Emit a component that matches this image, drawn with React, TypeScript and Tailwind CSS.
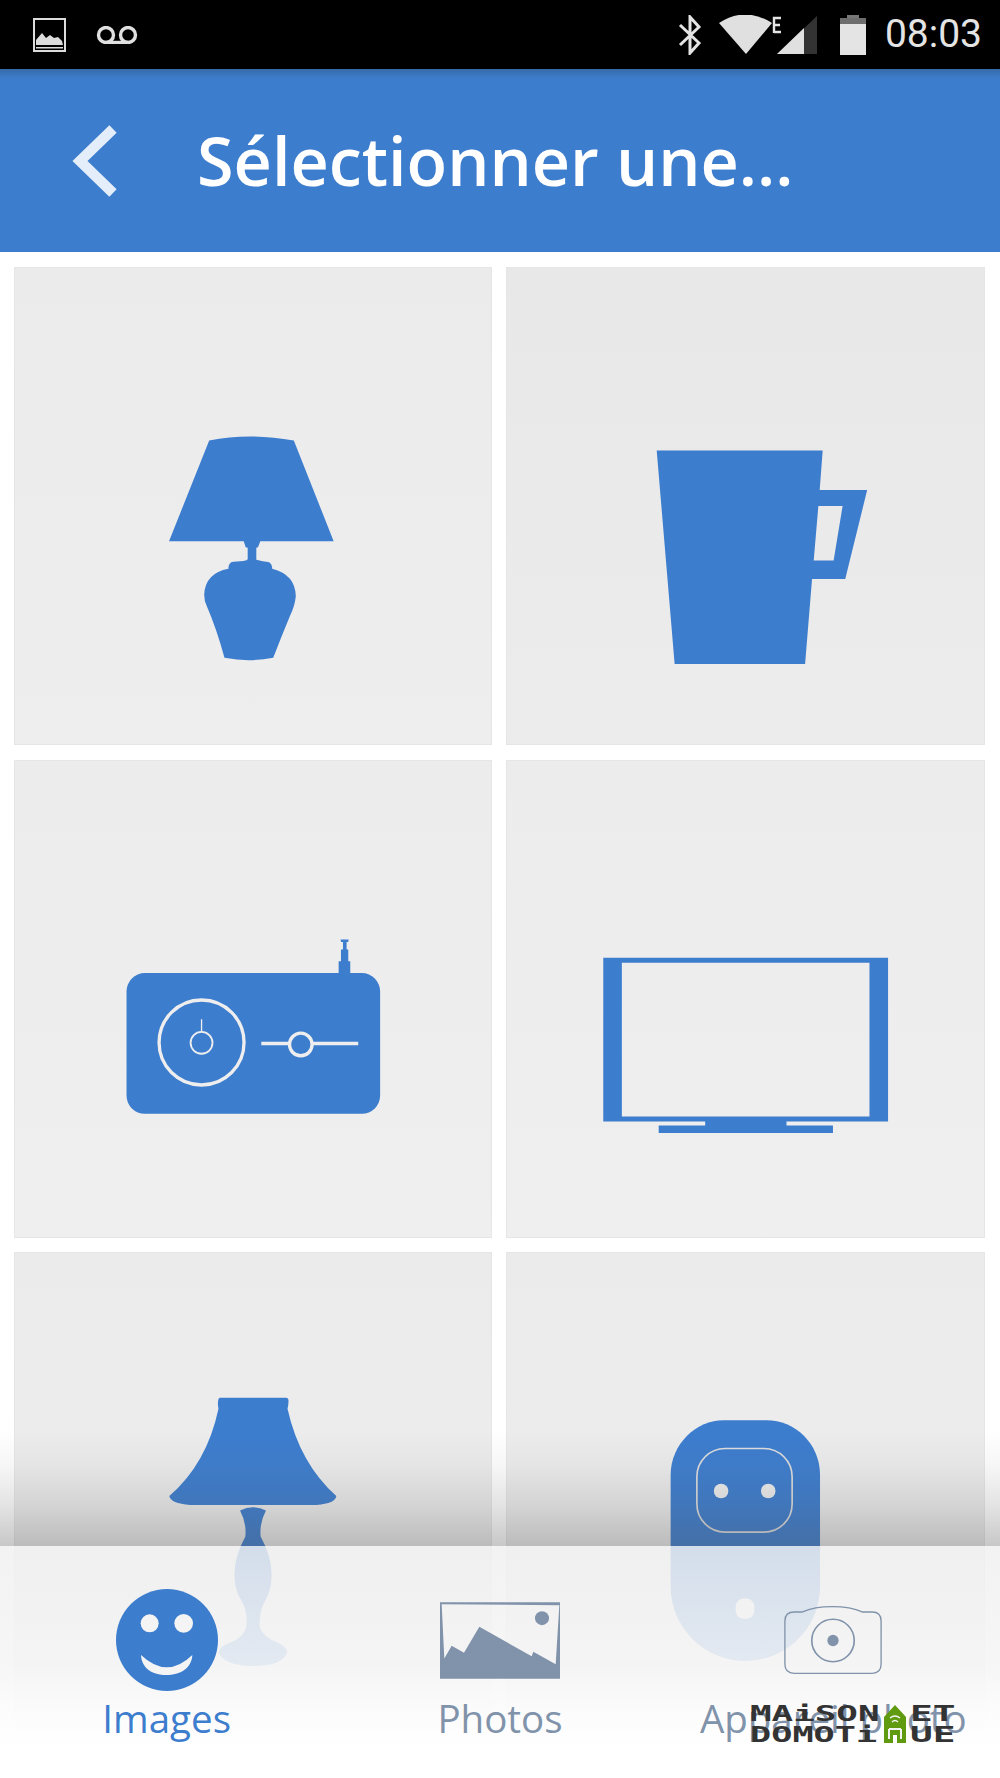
import React from "react";

const BLUE = "#3d7dce";
const SLATE = "#8093aa";

function Cell({ box, children, tone }: { box: string; children: React.ReactNode; tone: string }) {
  return (
    <div className={`h-[478px] border border-[#e6e6e6] ${tone}`}>
      <svg viewBox={box} className="block h-full w-full">
        {children}
      </svg>
    </div>
  );
}

function StatusBar() {
  return (
    <div className="flex h-[69px] items-center justify-between bg-black">
      <div className="flex items-center">
        <svg width="34" height="34" viewBox="0 0 34 34" className="ml-[33px]">
          <rect x="1" y="1" width="31" height="32" fill="none" stroke="#dcdcdc" strokeWidth="2" />
          <path d="M3 27 L3 22 L9 15 L13 20 L17 17 L21 20 L25 19 L29 23 L30 27 Z" fill="#dcdcdc" />
          <rect x="3" y="29" width="27" height="1.5" fill="#dcdcdc" />
        </svg>
        <svg width="42" height="18" viewBox="0 0 42 18" className="ml-[29px]">
          <circle cx="10" cy="9" r="7.5" fill="none" stroke="#e0e0e0" strokeWidth="3.4" />
          <circle cx="32" cy="9" r="7.5" fill="none" stroke="#e0e0e0" strokeWidth="3.4" />
          <path d="M10 16.5 H32" stroke="#e0e0e0" strokeWidth="3.4" />
        </svg>
      </div>
      <div className="flex items-center">
        <svg width="24" height="40" viewBox="0 0 24 40">
          <path d="M2 10 L21 28 L12 38 L12 2 L21 12 L2 30" fill="none" stroke="#e4e4e4" strokeWidth="3" />
        </svg>
        <svg width="100" height="40" viewBox="0 0 100 40" className="ml-[16px]">
          <path d="M28 39 L1 8 Q27 -9 54 8 Z" fill="#e0e0e0" />
          <path d="M56 18 V3 H63 M56 10 H62 M56 17 H63" fill="none" stroke="#e4e4e4" strokeWidth="2.4" />
          <path d="M59 39 L99 1 V39 Z" fill="#333333" />
          <path d="M59 39 L86 13 V39 Z" fill="#e0e0e0" />
        </svg>
        <div className="ml-[22px] flex h-[40px] w-[26px] flex-col items-center">
          <div className="h-[3px] w-[12px] bg-[#777777]" />
          <div className="h-[6px] w-full bg-[#6e6e6e]" />
          <div className="w-full flex-1 bg-[#e4e4e4]" />
        </div>
        <span className="ml-[19px] mr-[18px] font-['Roboto',sans-serif] text-[39px] leading-none text-[#e4e4e4]">
          08:03
        </span>
      </div>
    </div>
  );
}

function Header() {
  return (
    <div className="flex h-[183px] items-center bg-[linear-gradient(to_bottom,#3669a9,#3d7ccb_9px,#3d7dce_14px)]">
      <svg width="46" height="72" viewBox="0 0 46 72" className="ml-[72px]">
        <path d="M41 4 L8 36 L41 68" fill="none" stroke="#e3eefa" strokeWidth="10.5" />
      </svg>
      <h1 className="ml-[79px] font-['Open_Sans',sans-serif] text-[66.5px] font-semibold leading-none text-white">
        Sélectionner une...
      </h1>
    </div>
  );
}

function Grid() {
  return (
    <div className="grid grid-cols-[478px_479px] gap-x-[14px] gap-y-[14.5px] pl-[14px] pt-[15px]">
      <Cell box="0 0 1434 1434" tone="bg-[linear-gradient(to_bottom,#ebebeb,#eeeeee)]">
        <g transform="translate(258 399)">
          <path
            d="M206 424 L327 121 Q447 96 582 121 L702 424 L481 424 L474 442 L469 444 L469 480 Q490 486 505 487 Q516 490 517 507 Q587 525 588 590 Q585 620 570 650 Q545 710 520 775 Q447 790 373 775 Q350 690 320 620 Q312 605 312 585 Q315 520 385 507 Q385 487 400 486 L430 484 Q443 482 443 478 L443 444 L437 442 L431 424 Z"
            fill={BLUE}
          />
        </g>
      </Cell>
      <Cell box="0 0 1437 1434" tone="bg-[linear-gradient(to_bottom,#e8e8e8,#ececec)]">
        <g transform="translate(402 489)">
          <path
            fillRule="evenodd"
            d="M49 61 L549 61 L540 180 L683 180 L617 448 L517 448 L496 704 L103 704 Z M536 228 L609 228 L582 392 L522 392 Z"
            fill={BLUE}
          />
        </g>
      </Cell>
      <Cell box="0 0 1434 1434" tone="bg-[linear-gradient(to_bottom,#ececec,#efefef)]">
        <g transform="translate(258 483)">
          <path d="M723 55 H747 L746 62 H741 V85 H746 V120 H752 V160 H717 V120 H724 V85 H730 V62 H724 Z" fill={BLUE} />
          <rect x="78" y="156" width="764" height="424" rx="55" fill={BLUE} />
          <circle cx="304" cy="365" r="128" fill="none" stroke="#eeeeee" strokeWidth="10" />
          <circle cx="304" cy="366" r="33" fill="none" stroke="#eeeeee" strokeWidth="5.5" />
          <path d="M304 295 V333" stroke="#eeeeee" strokeWidth="4" />
          <path d="M484 368 H776" stroke="#eeeeee" strokeWidth="10" />
          <circle cx="603" cy="371" r="34" fill={BLUE} stroke="#eeeeee" strokeWidth="10" />
        </g>
      </Cell>
      <Cell box="0 0 1437 1434" tone="bg-[linear-gradient(to_bottom,#ececec,#efefef)]">
        <g transform="translate(222 543)">
          <path
            fillRule="evenodd"
            d="M68 50 H926 V543 H620 V555 H760 V578 H235 V555 H375 V543 H68 Z M124 65 V528 H870 V65 Z"
            fill={BLUE}
          />
        </g>
      </Cell>
      <Cell box="0 0 1434 1434" tone="bg-[linear-gradient(to_bottom,#ebebeb,#eeeeee)]">
        <g transform="translate(-42 384)">
          <path
            d="M660 52 L858 52 Q866 52 866 62 Q866 72 863 85 Q900 250 1010 348 Q1008 370 950 375 L570 375 Q510 370 507 348 Q620 250 655 85 Q652 70 654 62 Q655 52 660 52 Z"
            fill={BLUE}
          />
          <path
            d="M798 392 Q778 430 782 470 Q815 530 815 585 Q815 630 795 665 Q775 700 780 745 Q790 775 835 790 Q862 805 862 818 Q850 860 760 860 Q670 860 655 818 Q660 800 690 790 Q730 775 738 745 Q745 700 725 665 Q703 630 703 585 Q703 530 736 470 Q740 430 720 392 Q740 382 759 382 Q780 382 798 392 Z"
            fill={BLUE}
          />
        </g>
      </Cell>
      <Cell box="0 0 1437 1434" tone="bg-[linear-gradient(to_bottom,#ebebeb,#eeeeee)]">
        <g transform="translate(-18 384)">
          <path
            d="M511 285 C511 190 590 120 670 120 L800 120 C885 120 961 190 961 285 L961 620 C961 745 860 845 736 845 C612 845 511 745 511 620 Z"
            fill={BLUE}
          />
          <rect x="590" y="205" width="287" height="252" rx="85" fill="none" stroke="#dddddd" strokeWidth="5" />
          <circle cx="663" cy="333" r="22" fill="#eeeeee" />
          <circle cx="805" cy="333" r="22" fill="#eeeeee" />
          <rect x="707" y="657" width="56" height="61" rx="24" fill="#eeeeee" />
        </g>
      </Cell>
    </div>
  );
}

function Tab({ label, color, children }: { label: string; color: string; children: React.ReactNode }) {
  return (
    <div className="flex flex-col items-center pt-[38px]">
      <div className="flex h-[110px] items-center justify-center">{children}</div>
      <span className={`whitespace-nowrap font-['Open_Sans',sans-serif] text-[38.5px] leading-[48px] ${color}`}>
        {label}
      </span>
    </div>
  );
}

function BottomBar() {
  return (
    <div className="absolute inset-x-0 bottom-0 h-[232px]">
      <div className="absolute inset-x-0 bottom-full h-[115px] bg-[linear-gradient(to_bottom,rgba(83,83,83,0),rgba(83,83,83,0.05)_30%,rgba(83,83,83,0.16)_65%,rgba(83,83,83,0.32))]" />
      <div className="grid h-full grid-cols-3 bg-[linear-gradient(to_bottom,rgba(240,240,240,0.84),rgba(245,245,245,0.9)_50%,rgba(252,252,252,0.96)_72%,rgba(255,255,255,1)_88%)]">
        <Tab label="Images" color="text-[#3d7dce]">
          <svg width="102" height="102" viewBox="347 627 306 306" className="mt-[2px]">
            <circle cx="500" cy="780" r="153" fill={BLUE} />
            <circle cx="448" cy="730" r="27" fill="#f4f4f4" />
            <circle cx="550" cy="730" r="28" fill="#f4f4f4" />
            <path d="M422 825 Q500 899 576 825 C574 865 540 885 498 885 C456 885 424 865 422 825 Z" fill="#f4f4f4" />
          </svg>
        </Tab>
        <Tab label="Photos" color="text-[#8093aa]">
          <svg width="120" height="77" viewBox="1320 666 360 230" className="mt-[2px]">
            <path
              fillRule="evenodd"
              d="M1320 666 H1680 V896 H1320 Z M1325 672 L1333 835 L1355 797 L1392 818 L1438 740 L1595 828 L1600 815 L1667 852 L1678 675 Z"
              fill={SLATE}
            />
            <circle cx="1626" cy="714" r="21" fill={SLATE} />
          </svg>
        </Tab>
        <Tab label="Appareil photo" color="text-[#8093aa]">
          <svg width="98" height="68" viewBox="850 680 294 205" className="mt-[2px]">
            <path
              d="M880 698 L905 698 Q940 682 995 682 Q1050 682 1085 698 L1115 698 Q1142 698 1142 725 L1142 855 Q1142 883 1115 883 L880 883 Q852 883 852 855 L852 725 Q852 698 880 698 Z"
              fill="none"
              stroke={SLATE}
              strokeWidth="4"
            />
            <circle cx="997" cy="784" r="64" fill="none" stroke={SLATE} strokeWidth="5" />
            <circle cx="997" cy="784" r="17" fill={SLATE} />
          </svg>
        </Tab>
      </div>
    </div>
  );
}

function Watermark() {
  const text = "font-['DejaVu_Sans_Mono',monospace] font-bold text-[22px] leading-[16px] text-[#333333] origin-left";
  return (
    <div className="absolute left-[750px] top-[1703px] h-[40px] w-[206px]">
      <span className={`absolute left-0 top-[3px] scale-x-[1.63] ${text}`}>MAiSON</span>
      <span className={`absolute left-[160px] top-[3px] scale-x-[1.72] ${text}`}>ET</span>
      <span className={`absolute left-0 top-[24px] scale-x-[1.6] ${text}`}>DOMOTi</span>
      <span className={`absolute left-[160px] top-[24px] scale-x-[1.72] ${text}`}>UE</span>
      <svg width="24" height="40" viewBox="0 0 24 40" className="absolute left-[133px] top-[2px]">
        <path d="M12 0 L23 12 V38 H14 V30 H10 V38 H1 V12 Z" fill="#5f9a10" />
        <path d="M7 13 Q12 9 17 13 M9 17 Q12 14 15 17" fill="none" stroke="#f4f4f4" strokeWidth="1.4" />
        <path d="M6 24 H18 M6 24 V34 M18 24 V34" fill="none" stroke="#f4f4f4" strokeWidth="2" />
      </svg>
    </div>
  );
}

export default function App() {
  return (
    <div className="relative h-[1778px] w-[1000px] overflow-hidden bg-white">
      <StatusBar />
      <Header />
      <Grid />
      <BottomBar />
      <Watermark />
    </div>
  );
}
